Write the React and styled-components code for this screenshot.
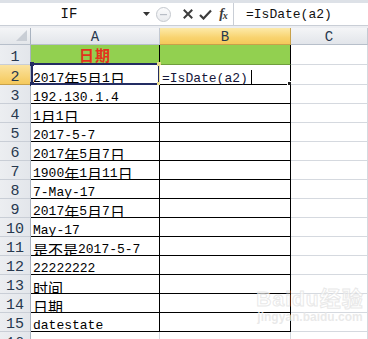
import React from 'react';
import styled, { createGlobalStyle, css } from 'styled-components';

const Global = createGlobalStyle`
  html, body { margin: 0; padding: 0; background: #fff; }
  body { font-family: "Liberation Mono", "Noto Sans CJK SC", monospace; color: #000; }
`;

const Frame = styled.div`
  width: 368px;
  height: 339px;
  overflow: hidden;
  background: #fff;
  position: relative;
  display: flex;
  flex-direction: column;
`;

const FormulaBar = styled.div`
  flex: none;
  height: 22px;
  border-top: 3px solid #dde1e7;
  display: flex;
  align-items: stretch;
  background: #fff;
`;

const Band = styled.div`
  flex: none;
  height: 2px;
  border-top: 1px solid #c9ced6;
  background: #eceef2;
`;

const NameBox = styled.div`
  width: 138px;
  display: flex;
  align-items: center;
  justify-content: center;
  font-size: 14px;
  color: #111;
`;

const Drop = styled.div`
  width: 16px;
  display: flex;
  align-items: center;
  justify-content: center;
`;

const Tools = styled.div`
  display: flex;
  align-items: center;
  width: 79px;
`;

const Round = styled.div`
  width: 13px;
  height: 13px;
  border-radius: 50%;
  border: 1px solid #c4c8ce;
  background: linear-gradient(#fbfbfc, #e9ebee);
  margin: 0 8px 0 2px;
  display: flex;
  align-items: center;
  justify-content: center;
`;

const ToolIcon = styled.div`
  width: ${p => p.$w}px;
  display: flex;
  align-items: center;
  justify-content: center;
`;

const Fx = styled.span`
  font-family: "Liberation Serif", serif;
  font-style: italic;
  font-weight: bold;
  font-size: 14px;
  color: #3a3a3a;
  letter-spacing: -1px;
  sub { font-size: 10px; vertical-align: -1px; }
`;

const Input = styled.div`
  flex: 1;
  border-left: 1px solid #c9ced6;
  display: flex;
  align-items: center;
  padding-left: 12px;
  font-size: 13px;
  color: #111;
`;

const Sheet = styled.div`
  display: grid;
  grid-template-columns: 31px 129px 131px 1fr;
  grid-template-rows: 17px 20px 20px repeat(14, 19px);
  flex: none;
`;

const headBase = css`
  box-sizing: border-box;
  display: flex;
  justify-content: center;
  color: #27384e;
  border-right: 1px solid #c3c9d2;
  border-bottom: 1px solid #b7bfca;
`;

const Corner = styled.div`
  ${headBase};
  position: relative;
  background: linear-gradient(#f4f5f7, #e3e6ea);
  border-right: 1px solid #a9b3c0;
  &::after {
    content: "";
    position: absolute;
    right: 3px;
    bottom: 3px;
    width: 11px;
    height: 11px;
    background: #c9ced5;
    clip-path: polygon(100% 0, 100% 100%, 0 100%);
  }
`;

const ColHead = styled.div`
  ${headBase};
  align-items: flex-end;
  font-size: 14px;
  line-height: 10px;
  padding-bottom: 2px;
  background: ${p => p.$active
    ? 'linear-gradient(#fdeaa9, #f8d36f 60%, #f4c85a)'
    : 'linear-gradient(#f4f5f7, #e2e5ea)'};
  ${p => p.$active && css`border-right-color: #c8a14a; border-bottom-color: #c8a14a;`}
`;

const RowHead = styled.div`
  ${headBase};
  align-items: flex-end;
  font-size: 15px;
  line-height: 10px;
  padding-bottom: 1px;
  border-right: 1px solid #a9b3c0;
  border-bottom: 1px solid #c9ced6;
  background: ${p => p.$active
    ? 'linear-gradient(#fbe3a0, #f5c95c)'
    : 'linear-gradient(90deg, #eceef1, #e3e6eb)'};
  ${p => p.$active && css`border-bottom-color: #c8a14a;`}
`;

const Cell = styled.div`
  box-sizing: border-box;
  position: relative;
  display: flex;
  align-items: flex-end;
  padding-left: 2px;
  font-size: 13px;
  line-height: 10px;
  white-space: nowrap;
  border-right: 1px solid ${p => (p.$grid ? '#d5d9df' : '#000')};
  border-bottom: 1px solid ${p => (p.$grid ? '#d5d9df' : '#000')};
  background: ${p => (p.$green ? '#92d050' : '#fff')};
  ${p => p.$center && css`justify-content: center; padding-left: 0;`}
  ${p => p.$green && css`border-bottom-color: #6f9e3c;`}
`;

const Title = styled.span`
  font-family: "Noto Sans CJK SC", sans-serif;
  font-weight: bold;
  font-size: 15px;
  line-height: 19px;
  color: #e5321c;
  letter-spacing: 1px;
`;

const Han = styled.span`
  font-family: "Noto Sans CJK SC", sans-serif;
  font-size: 15px;
  line-height: 10px;
`;

const Selection = styled.div`
  position: absolute;
  top: -2px;
  left: 0;
  right: -1px;
  bottom: -1px;
  border: 2px solid #232c62;
  pointer-events: none;
`;

const Handle = styled.i`
  position: absolute;
  width: 4px;
  height: 4px;
  background: ${p => (p.$yellow ? '#e9dc8d' : '#232c62')};
  ${p => (p.$top ? 'top: -3px;' : 'bottom: -3px;')}
  ${p => (p.$left ? 'left: -3px;' : 'right: -3px;')}
`;

const EditText = styled.span`
  color: #15163a;
`;

const Caret = styled.span`
  display: inline-block;
  width: 1px;
  height: 14px;
  background: #000;
  margin-left: 3px;
  vertical-align: -2px;
`;

const FillHandle = styled.i`
  position: absolute;
  right: -3px;
  bottom: -3px;
  width: 4px;
  height: 4px;
  background: #222;
  border: 1px solid #fff;
`;

const EditEdge = styled.i`
  position: absolute;
  left: -1px;
  top: 0;
  bottom: 0;
  width: 1px;
  background: #efe3a0;
`;

const Watermark = styled.div`
  position: absolute;
  left: 250px;
  top: 288px;
  width: 120px;
  pointer-events: none;
  display: flex;
  flex-direction: column;
  align-items: center;
  color: rgba(255, 255, 255, 0.6);
  -webkit-text-stroke: 1px rgba(225, 225, 225, 0.75);
`;

const MarkBig = styled.div`
  font-family: "Liberation Sans", "Noto Sans CJK SC", sans-serif;
  font-weight: bold;
  font-size: 21px;
  line-height: 22px;
  letter-spacing: 1px;
`;

const MarkSmall = styled.div`
  font-family: "Liberation Sans", sans-serif;
  font-weight: bold;
  font-size: 12px;
  line-height: 14px;
  color: rgba(228, 228, 228, 0.8);
  -webkit-text-stroke: 0;
`;

function Txt({ s }) {
  const parts = s.split(/([\u3400-\u9fff]+)/);
  return parts.map((p, i) =>
    /[\u3400-\u9fff]/.test(p) ? <Han key={i}>{p}</Han> : <React.Fragment key={i}>{p}</React.Fragment>
  );
}

const data = [
  '2017年5月1日',
  '192.130.1.4',
  '1月1日',
  '2017-5-7',
  '2017年5月7日',
  '1900年1月11日',
  '7-May-17',
  '2017年5月7日',
  'May-17',
  '是不是2017-5-7',
  '22222222',
  '时间',
  '日期',
  'datestate',
];

export default function App() {
  return (
    <>
      <Global />
      <Frame>
        <FormulaBar>
          <NameBox>IF</NameBox>
          <Drop>
            <svg width="7" height="4" viewBox="0 0 7 4"><path d="M0 0h7L3.5 4z" fill="#333" /></svg>
          </Drop>
          <Tools>
            <Round>
              <svg width="7" height="3" viewBox="0 0 7 3"><rect x="0" y="1" width="7" height="1.2" fill="#b9bec6" /></svg>
            </Round>
            <ToolIcon $w={17}>
              <svg width="10" height="10" viewBox="0 0 10 10">
                <path d="M1.5 1.5L8.5 8.5M8.5 1.5L1.5 8.5" stroke="#3c3c3c" strokeWidth="2" strokeLinecap="square" />
              </svg>
            </ToolIcon>
            <ToolIcon $w={19}>
              <svg width="13" height="11" viewBox="0 0 13 11">
                <path d="M1 6l3.5 3.5L12 1.5" stroke="#3c3c3c" strokeWidth="2.2" fill="none" />
              </svg>
            </ToolIcon>
            <ToolIcon $w={16}>
              <Fx>f<sub>x</sub></Fx>
            </ToolIcon>
          </Tools>
          <Input>=IsDate(a2)</Input>
        </FormulaBar>
        <Band />
        <Sheet>
          <Corner />
          <ColHead>A</ColHead>
          <ColHead $active>B</ColHead>
          <ColHead>C</ColHead>

          <RowHead>1</RowHead>
          <Cell $green $center><Title>日期</Title></Cell>
          <Cell $green />
          <Cell $grid />

          <RowHead $active>2</RowHead>
          <Cell>
            <Txt s={data[0]} />
            <Selection>
              <Handle $top $left />
              <Handle $top $yellow />
              <Handle $left />
              <Handle $yellow />
            </Selection>
          </Cell>
          <Cell>
            <EditEdge />
            <EditText>=IsDate(a2)<Caret /></EditText>
            <FillHandle />
          </Cell>
          <Cell $grid />

          {data.slice(1).map((s, i) => (
            <React.Fragment key={i}>
              <RowHead>{i + 3}</RowHead>
              <Cell><Txt s={s} /></Cell>
              <Cell />
              <Cell $grid />
            </React.Fragment>
          ))}

          <RowHead>16</RowHead>
          <Cell $grid />
          <Cell $grid />
          <Cell $grid />
        </Sheet>
        <Watermark>
          <MarkBig>Baidu经验</MarkBig>
          <MarkSmall>jingyan.baidu.com</MarkSmall>
        </Watermark>
      </Frame>
    </>
  );
}
